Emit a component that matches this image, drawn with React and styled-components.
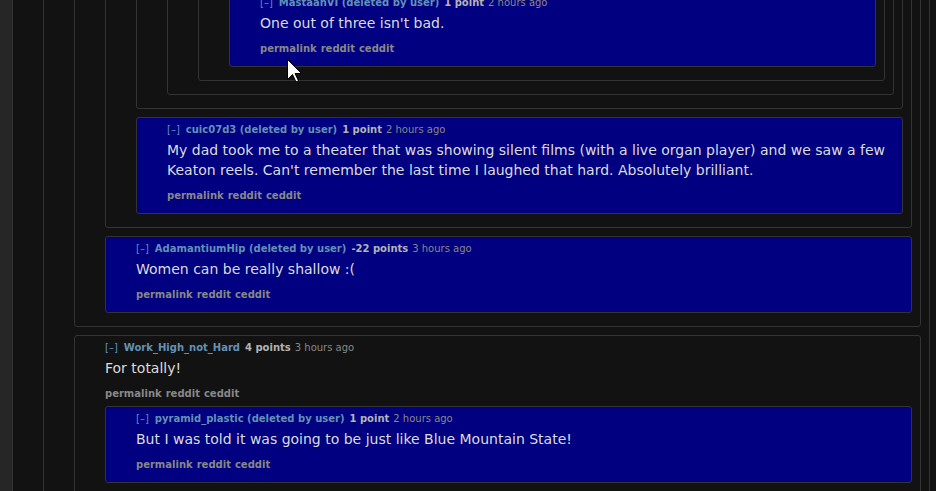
import React, { useLayoutEffect, useRef } from "react";
import styled, { createGlobalStyle } from "styled-components";

const GlobalStyle = createGlobalStyle`
  html, body {
    margin: 0;
    padding: 0;
    background: #262626;
    overflow: hidden;
    font-family: "DejaVu Sans", Verdana, sans-serif;
  }
  a { text-decoration: none; }
`;

const Viewport = styled.div`
  height: 100vh;
  overflow: hidden;
  padding-left: 12px;
  box-sizing: border-box;
`;

const Thread = styled.div`
  margin-right: -3px;
  padding-top: 20px;
`;

const Box = styled.div`
  border: 1px solid #333;
  border-radius: 3px;
  background: ${(p) => (p.$deleted ? "#000080" : "#121212")};
  padding: 4px 8px 5px 30px;
  margin-bottom: 8px;
`;

const Header = styled.div`
  padding-top: 1px;
  font-size: 10px;
  line-height: 14px;
  white-space: nowrap;
  color: #888;
`;

const Toggle = styled.a`
  color: #5b8fc4;
  margin-right: 6px;
`;

const Author = styled.a`
  color: #6391b5;
  font-weight: bold;
  margin-right: 5px;
`;

const Score = styled.span`
  color: #b4b4b4;
  font-weight: bold;
  margin-right: 4px;
`;

const Time = styled.span`
  color: #888;
`;

const Body = styled.div`
  margin-top: 3px;
  font-size: 14px;
  line-height: 20px;
  color: #dcdcdc;
`;

const Actions = styled.div`
  display: flex;
  gap: 4px;
  margin: 9px 0 5px;
  font-size: 10px;
  line-height: 14px;
`;

const ActionLink = styled.a`
  color: #888;
  font-weight: bold;
`;

const Cursor = styled.svg`
  position: fixed;
  left: 287px;
  top: 59px;
  pointer-events: none;
`;

const thread = {
  author: "Ferrous_Wheel",
  score: "52 points",
  time: "4 hours ago",
  body: "Buster Keaton was a genius.",
  replies: [
    {
      author: "lonely_dreamer",
      score: "31 points",
      time: "4 hours ago",
      body: "The General still holds up.",
      replies: [
        {
          author: "salt_and_sand",
          score: "12 points",
          time: "3 hours ago",
          body: "My girlfriend fell asleep.",
          replies: [
            {
              author: "quietly_amused",
              score: "8 points",
              time: "3 hours ago",
              body: "Mine did too.",
              replies: [
                {
                  author: "JimmyTheHat",
                  score: "5 points",
                  time: "3 hours ago",
                  body: "Get a new one.",
                  replies: [
                    {
                      author: "neon_moth",
                      score: "3 points",
                      time: "2 hours ago",
                      body: "Sound advice.",
                      replies: [
                        {
                          author: "otter_pop",
                          score: "2 points",
                          time: "2 hours ago",
                          body: "Watched it twice.",
                          replies: [
                            {
                              anchor: true,
                              deleted: true,
                              author: "MastaanVI (deleted by user)",
                              score: "1 point",
                              time: "2 hours ago",
                              body: "One out of three isn't bad.",
                            },
                          ],
                        },
                      ],
                    },
                  ],
                },
                {
                  deleted: true,
                  author: "cuic07d3 (deleted by user)",
                  score: "1 point",
                  time: "2 hours ago",
                  body:
                    "My dad took me to a theater that was showing silent films (with a live organ player) and we saw a few Keaton reels. Can't remember the last time I laughed that hard. Absolutely brilliant.",
                },
              ],
            },
            {
              deleted: true,
              author: "AdamantiumHip (deleted by user)",
              score: "-22 points",
              time: "3 hours ago",
              body: "Women can be really shallow :(",
            },
          ],
        },
        {
          author: "Work_High_not_Hard",
          score: "4 points",
          time: "3 hours ago",
          body: "For totally!",
          replies: [
            {
              deleted: true,
              author: "pyramid_plastic (deleted by user)",
              score: "1 point",
              time: "2 hours ago",
              body: "But I was told it was going to be just like Blue Mountain State!",
            },
          ],
        },
      ],
    },
  ],
};

function Comment({ c, anchorRef }) {
  return (
    <Box $deleted={c.deleted} ref={c.anchor ? anchorRef : undefined}>
      <Header>
        <Toggle href="#">[–]</Toggle>
        <Author href="#">{c.author}</Author>
        <Score>{c.score}</Score>
        <Time>{c.time}</Time>
      </Header>
      <Body>{c.body}</Body>
      <Actions>
        <ActionLink href="#">permalink</ActionLink>
        <ActionLink href="#">reddit</ActionLink>
        <ActionLink href="#">ceddit</ActionLink>
      </Actions>
      {(c.replies || []).map((r, i) => (
        <Comment key={i} c={r} anchorRef={anchorRef} />
      ))}
    </Box>
  );
}

export default function App() {
  const vpRef = useRef(null);
  const anchorRef = useRef(null);

  useLayoutEffect(() => {
    const vp = vpRef.current;
    const a = anchorRef.current;
    if (!vp || !a) return;
    const top =
      a.getBoundingClientRect().top - vp.getBoundingClientRect().top + vp.scrollTop;
    vp.scrollTop = top + 10;
  }, []);

  return (
    <>
      <GlobalStyle />
      <Viewport ref={vpRef}>
        <Thread>
          <Comment c={thread} anchorRef={anchorRef} />
        </Thread>
      </Viewport>
      <Cursor width="16" height="25" viewBox="0 0 16 25">
        <path
          d="M0.5 0.5 L0.5 20.5 L5.5 15.5 L9 23 L11.5 21.8 L8 14.5 L14.5 14.5 Z"
          fill="#fff"
          stroke="#000"
          strokeWidth="1"
          strokeLinejoin="miter"
        />
      </Cursor>
    </>
  );
}
